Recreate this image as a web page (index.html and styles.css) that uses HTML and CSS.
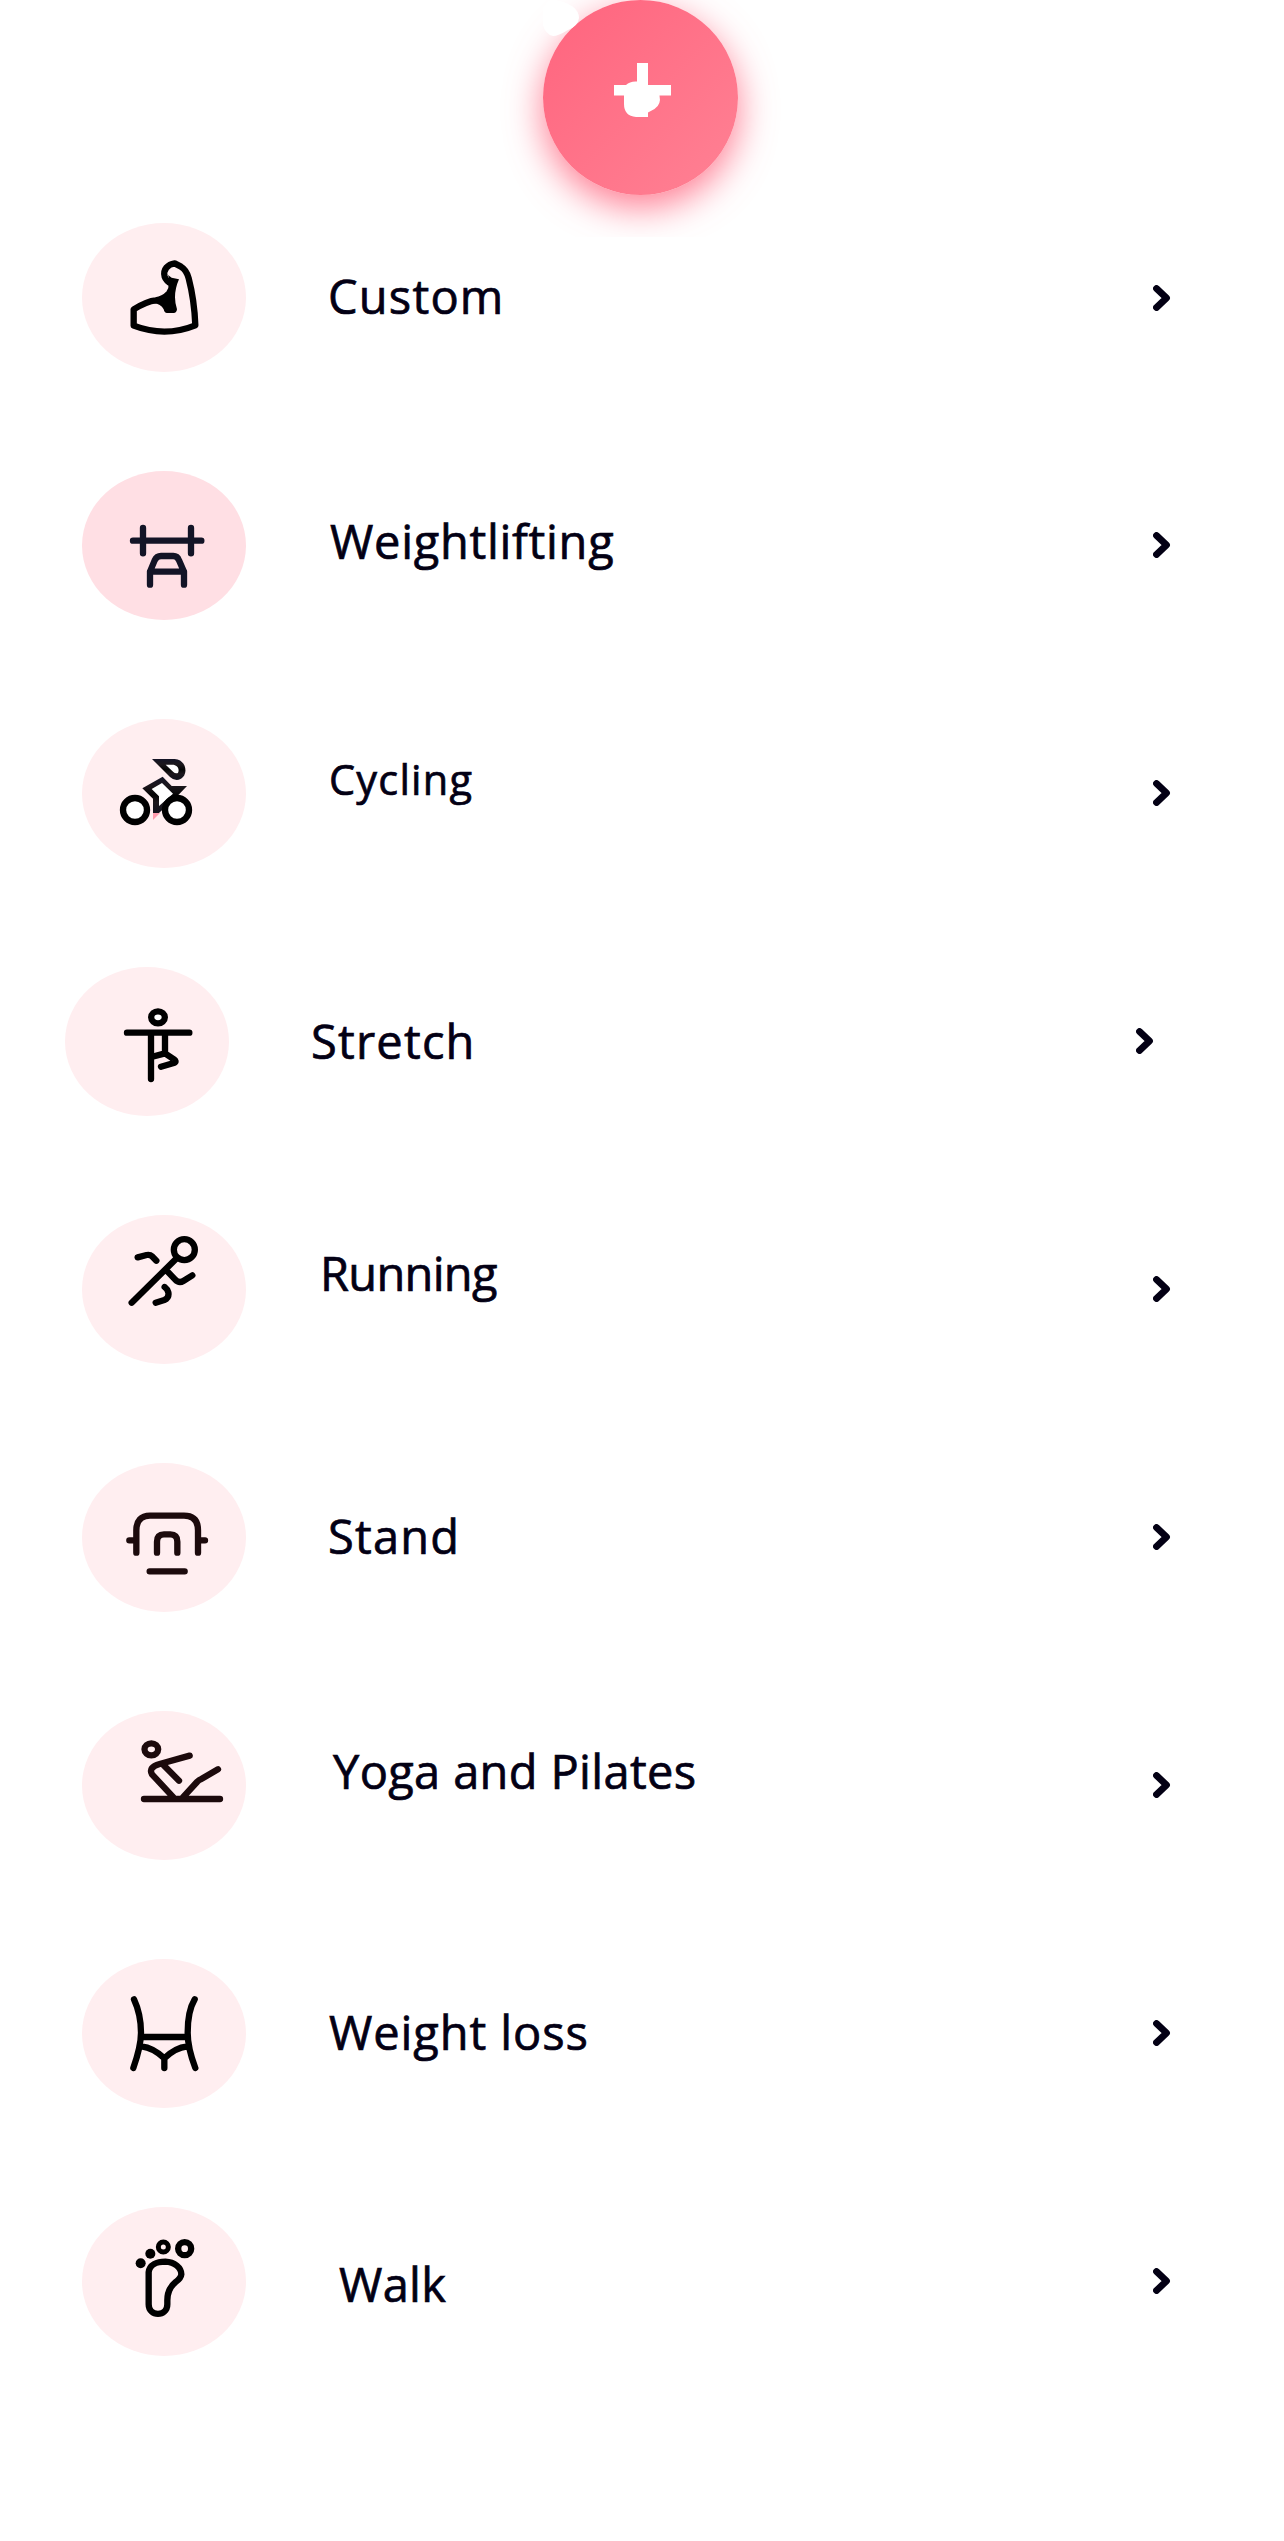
FILE: index.html
```html
<!DOCTYPE html>
<html lang="en">
<head>
<meta charset="utf-8">
<title>Workouts</title>
<link rel="stylesheet" href="styles.css">
</head>
<body>
<header class="top">
  <button class="add" aria-label="Add workout">
    <svg viewBox="0 0 195 195">
      <path class="blob" d="M0 11C0 3 6 -1 13 0Q36 5 36 18Q35 26 25 30Q15 36 10 36Q2 34 0 25Z"/>
      <path class="blob" d="M94 63h11v22h23v10.500h-11.500q2 9-5 13.500l-6.500 3.500v4.500h-12q-12-1-12-13v-8.500h-10V85h12q4-4 11-3.500Z"/>
    </svg>
  </button>
</header>
<ul class="list">
  <li class="row custom">
    <span class="badge"><svg viewBox="66 39 492 447">
      <path class="line" d="M221 347V298Q262 273 287 271Q310 268 327 250Q337 238 335 222Q318 212 314 200C308 178 324 163 344 160L363 170Q380 180 386 205Q403 270 406 346Q315 383 221 347Z"/>
      <path d="M324 195L335 203L357 208Q345 235 345 262Q345 280 351 298Q350 309 341 309H321Q313 309 311 298Q302 281 281 280L300 262L325 245L332 222Z"/>
    </svg></span>
    <span class="label">Custom</span>
    <svg class="chevron" viewBox="0 0 18 26"><path d="M3.500 3.500L13.500 13L3.500 22.500"/></svg>
  </li>
  <li class="row lifting">
    <span class="badge"><svg viewBox="66 33 492 447">
      <path class="line" d="M219 242H424M249 204V280M393 204V280M270 374V335L284 301Q290 288 303 288H340Q352 288 357 301L372 335V374M270 335H372"/>
    </svg></span>
    <span class="label">Weightlifting</span>
    <svg class="chevron" viewBox="0 0 18 26"><path d="M3.500 3.500L13.500 13L3.500 22.500"/></svg>
  </li>
  <li class="row cycling">
    <span class="badge"><svg viewBox="66 57 492 447">
      <defs><linearGradient id="rider" x1="0" y1="0" x2="0" y2="1"><stop offset="0" stop-color="#131426"/><stop offset=".25" stop-color="#1c171c"/><stop offset=".5" stop-color="#050505"/><stop offset=".7" stop-color="#1c171c"/><stop offset="1" stop-color="#10111c"/></linearGradient></defs>
      <path fill="url(#rider)" d="M276 177H344C386 180 386 238 350 240Q338 239 330 231Z"/>
      <path class="hole" d="M317 194H341C357 198 358 212 354 219Q346 222 340 216Z"/>
      <path fill="url(#rider)" d="M308 230L335 258H381L350 290L296 340H279V296L247 265Z"/>
      <path class="hole" d="M306 249L339 281L297 318V289L275 267Z"/>
      <path class="pedal" d="M279 339H300L279 360Z"/>
      <circle class="line hollow" cx="225" cy="330" r="36"/>
      <circle class="line hollow" cx="351" cy="330" r="36"/>
    </svg></span>
    <span class="label">Cycling</span>
    <svg class="chevron" viewBox="0 0 18 26"><path d="M3.500 3.500L13.500 13L3.500 22.500"/></svg>
  </li>
  <li class="row stretch">
    <span class="badge"><svg viewBox="45 51 492 447">
      <ellipse class="line hollow" cx="324" cy="202" rx="20.500" ry="18"/>
      <path class="line" d="M231 248H418M303 248V387M345 248V310L304 321M345 310L372 328Q380 334 374 338L333 350"/>
    </svg></span>
    <span class="label">Stretch</span>
    <svg class="chevron" viewBox="0 0 18 26"><path d="M3.500 3.500L13.500 13L3.500 22.500"/></svg>
  </li>
  <li class="row running">
    <span class="badge"><svg viewBox="66 44 492 447">
      <circle class="line" cx="373" cy="148" r="31.500"/>
      <path class="line" d="M215 307L350 174M233 171L260 164Q270 162 276 168L289 181M317 208L345 237Q357 250 370 242L397 225M287 307L313 299Q328 293 325 276Q322 266 314 260"/>
    </svg></span>
    <span class="label">Running</span>
    <svg class="chevron" viewBox="0 0 18 26"><path d="M3.500 3.500L13.500 13L3.500 22.500"/></svg>
  </li>
  <li class="row stand">
    <span class="badge"><svg viewBox="66 38 492 447">
      <path class="line" d="M229 307V240C229 211 243 196 270 196H372C400 196 414 211 414 240V307M208 270H229M414 270H435M291 307V274Q291 252 312 252H331Q352 252 352 274V307M269 363H374"/>
    </svg></span>
    <span class="label">Stand</span>
    <svg class="chevron" viewBox="0 0 18 26"><path d="M3.500 3.500L13.500 13L3.500 22.500"/></svg>
  </li>
  <li class="row yoga">
    <span class="badge"><svg viewBox="66 33 492 447">
      <ellipse class="line" cx="274" cy="148" rx="20.500" ry="18"/>
      <path class="line" d="M389 167L299 192Q264 202 276 223L341 293M311 196L357 242M368 293L411 246Q416 240 424 237L474 208M252 297H480"/>
    </svg></span>
    <span class="label">Yoga and Pilates</span>
    <svg class="chevron" viewBox="0 0 18 26"><path d="M3.500 3.500L13.500 13L3.500 22.500"/></svg>
  </li>
  <li class="row loss">
    <span class="badge"><svg viewBox="66 24 492 447">
      <path class="line" d="M222 145Q243 190 243 245Q243 285 220 351M404 145Q383 180 383 245Q383 290 406 351M243 258H383M244 286Q280 290 313 322Q345 290 382 286M313 322V351"/>
    </svg></span>
    <span class="label">Weight loss</span>
    <svg class="chevron" viewBox="0 0 18 26"><path d="M3.500 3.500L13.500 13L3.500 22.500"/></svg>
  </li>
  <li class="row walk">
    <span class="badge"><svg viewBox="66 48 492 447">
      <circle cx="242" cy="217" r="15"/>
      <circle cx="271" cy="188" r="15"/>
      <circle class="line toe" cx="310" cy="168" r="15"/>
      <circle class="line" cx="374" cy="173" r="19.500"/>
      <path class="line" d="M266 244C268 222 290 212 316 212C344 213 364 230 364 250Q363 262 347 273Q322 293 322 328V340C322 378 266 378 266 340Z"/>
    </svg></span>
    <span class="label">Walk</span>
    <svg class="chevron" viewBox="0 0 18 26"><path d="M3.500 3.500L13.500 13L3.500 22.500"/></svg>
  </li>
</ul>
</body>
</html>
```
FILE: styles.css
```css
body {
  margin: 0;
  min-height: 2541px;
  background: #fff;
  color: #030014;
  font-family: "Open Sans", "Noto Sans", sans-serif;
}

.top {
  box-sizing: border-box;
  height: 237px;
  padding-left: 543px;
  overflow: hidden;
}

.add {
  display: block;
  width: 195px;
  height: 195px;
  padding: 0;
  border: 0;
  border-radius: 50%;
  background: linear-gradient(135deg, #ff6780 10%, #ff8093 95%);
  box-shadow: 0 12px 36px rgba(255, 80, 110, .75);
}

.add svg {
  display: block;
  width: 195px;
  height: 195px;
  overflow: visible;
}

.blob {
  fill: #fff;
}

.list {
  display: grid;
  gap: 98.950px;
  margin: -14px 0 0;
  padding: 0 113px 0 82px;
  list-style: none;
}

.row {
  display: grid;
  grid-template-columns: 164px 1fr 18px;
  align-items: start;
  height: 149px;
}

.badge {
  height: 149px;
  border-radius: 50%;
  background: #ffeef0;
}

.badge svg {
  display: block;
  width: 164px;
  height: 149px;
}

.line {
  fill: none;
  stroke: #000;
  stroke-width: 19;
  stroke-linecap: round;
  stroke-linejoin: round;
}

.hollow,
.hole {
  fill: #fff;
}

.pedal {
  fill: #ff9cae;
}

.toe {
  stroke-width: 15;
}

.label {
  padding: 42.500px 0 0 82px;
  font-size: 47px;
  font-weight: 500;
  line-height: 60px;
  letter-spacing: 1.200px;
  white-space: nowrap;
  -webkit-text-stroke: .7px #030014;
}

.chevron {
  align-self: center;
  width: 18px;
  height: 26px;
}

.chevron path {
  fill: none;
  stroke: #030014;
  stroke-width: 6.800;
  stroke-linecap: round;
  stroke-linejoin: round;
}

.lifting .badge {
  background: #ffdfe4;
}

.lifting .line {
  stroke: #131426;
}

.lifting .label {
  padding-top: 40px;
  padding-left: 84px;
  letter-spacing: .700px;
}

.cycling .label {
  padding-top: 30.500px;
  padding-left: 83px;
  font-size: 41.500px;
}

.stretch {
  margin: 0 17px 0 -17px;
}

.stretch .label {
  padding-top: 44px;
}

.running .label {
  padding-top: 28px;
  padding-left: 74px;
  letter-spacing: -.700px;
}

.stand .label {
  padding-top: 43.500px;
}

.stand .line,
.yoga .line {
  stroke: #1c0a0c;
}

.yoga .label {
  padding-top: 30.500px;
  padding-left: 87px;
  letter-spacing: .350px;
}

.loss .label {
  padding-top: 43.500px;
  padding-left: 83px;
  letter-spacing: .900px;
}

.walk .label {
  padding-top: 47.500px;
  padding-left: 93px;
  letter-spacing: .300px;
}
```
